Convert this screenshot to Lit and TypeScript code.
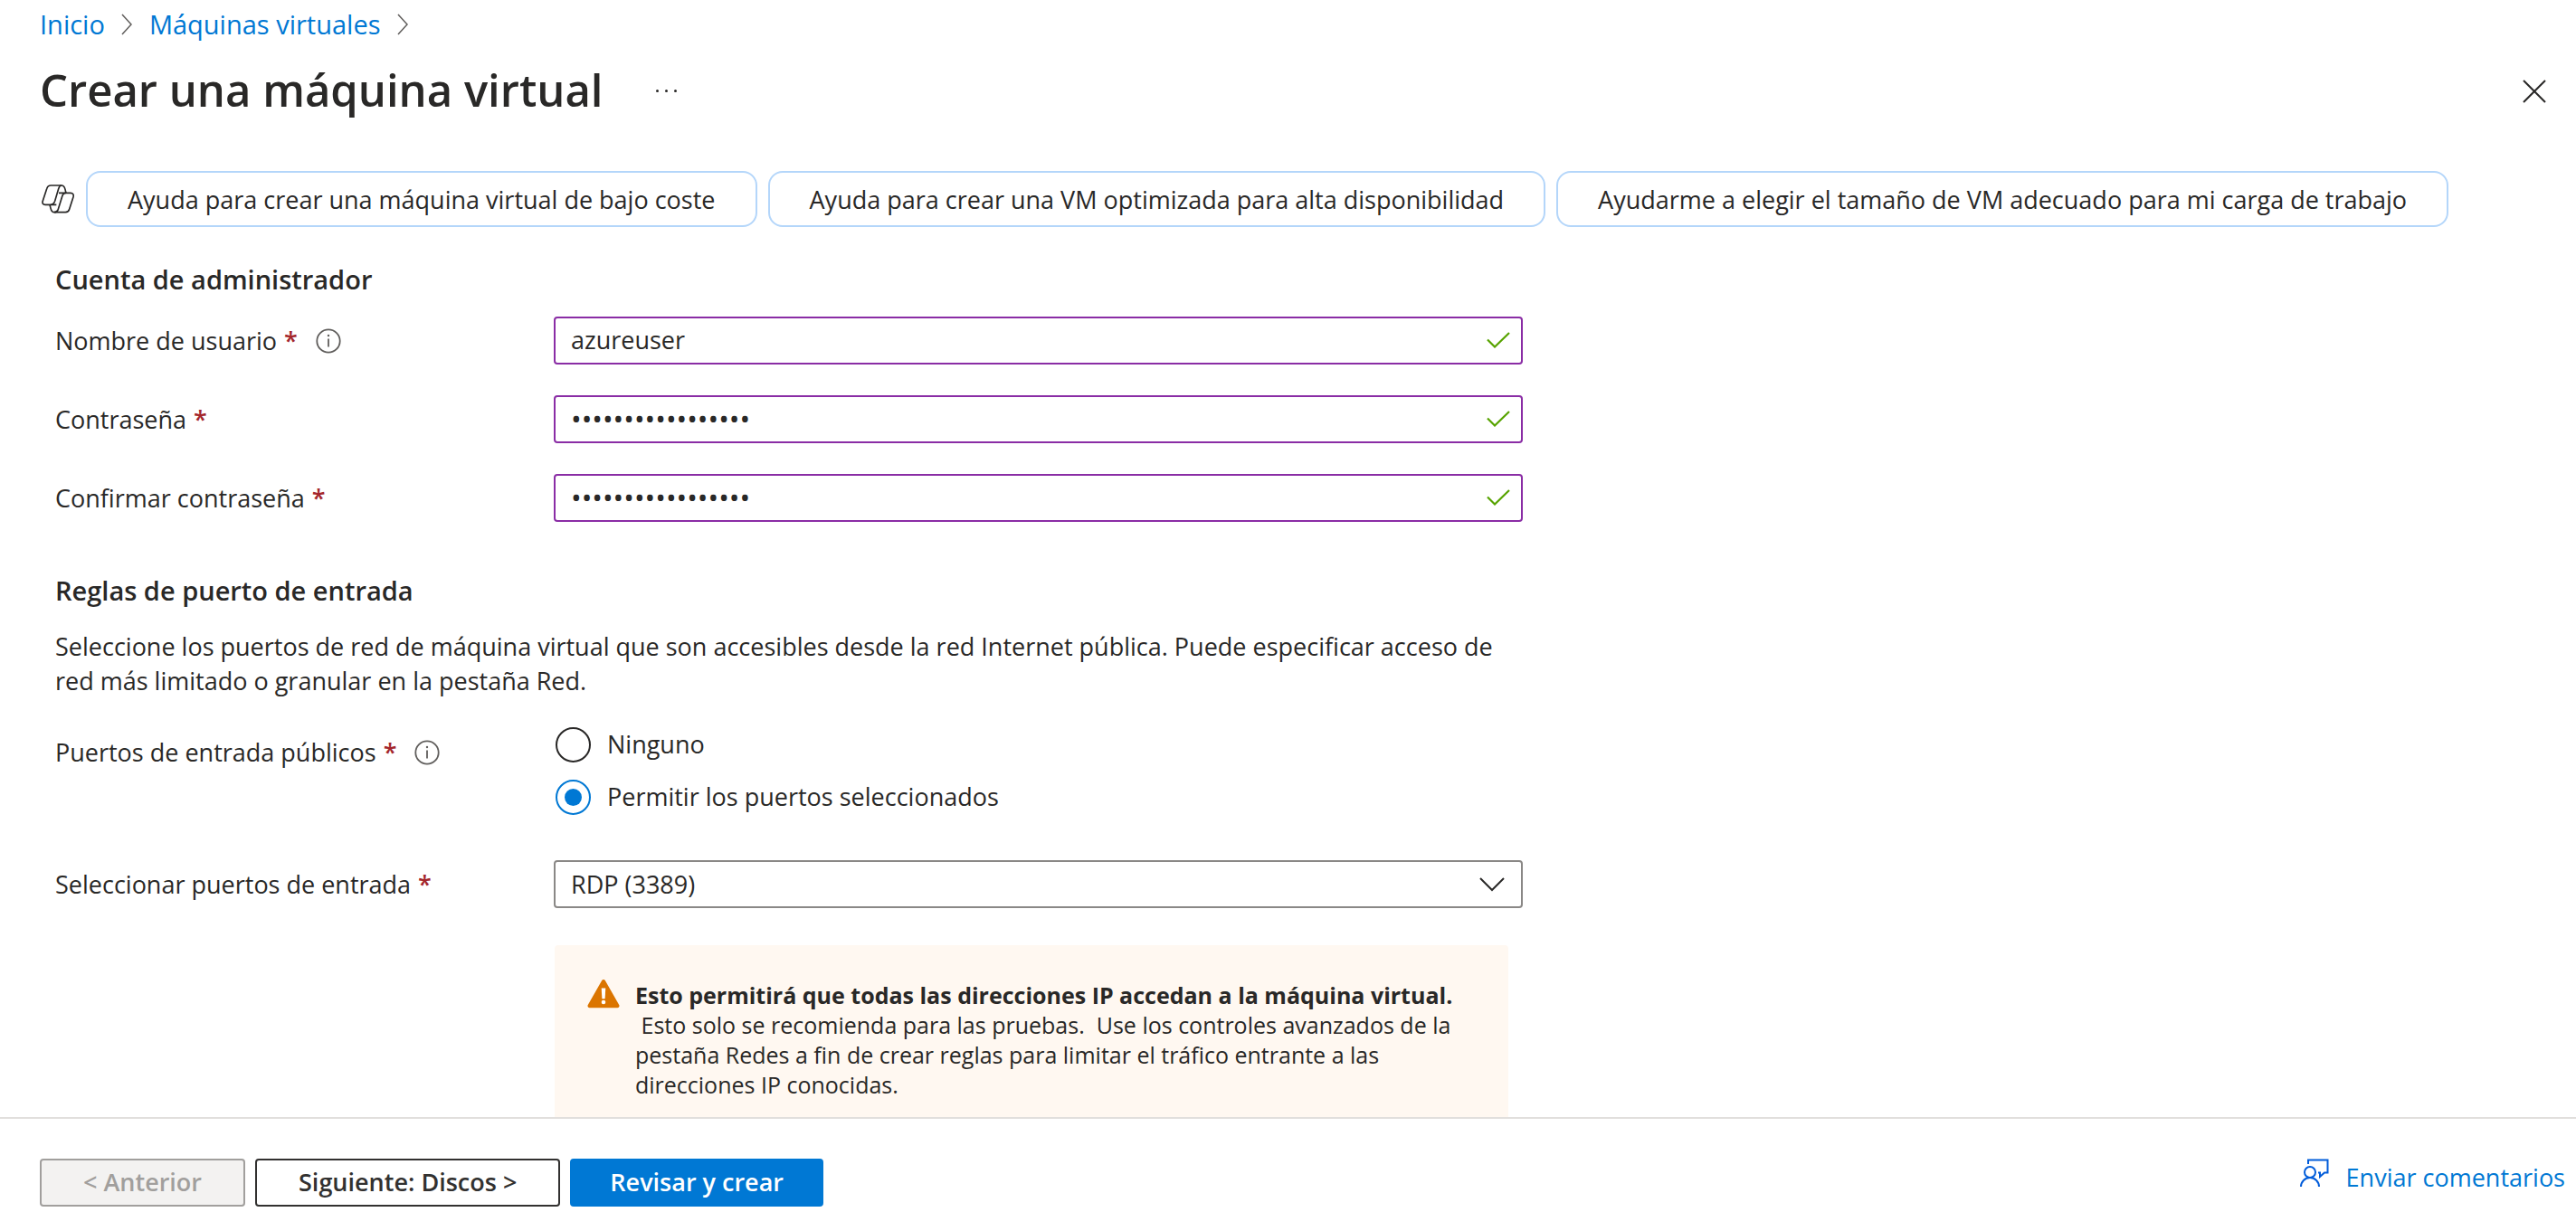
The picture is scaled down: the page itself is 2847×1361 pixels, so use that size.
import { LitElement, html, css, svg } from "lit";
import { customElement, property, state } from "lit/decorators.js";

const icons = {
  crumb: svg`<svg class="crumb-sep" viewBox="0 0 12 24" aria-hidden="true"><path d="M1 1 11 12 1 23" /></svg>`,
  check: svg`<svg class="check" viewBox="0 0 26 18" aria-hidden="true"><path d="M1 8.5 9 16.5 25 1" /></svg>`,
  copilot: svg`<svg class="copilot" viewBox="0 0 108 96" aria-hidden="true">
    <path d="M66 3H31C22 3 19 7 17 14L4 54C1 63 5 67 12 67H49" />
    <path d="M66 3C60 3 58 7 56 14L44 55C41 64 38 67 30 67" />
    <path d="M66 3C74 3 76 8 78 16L81 28" />
    <path d="M57 28H96C104 28 107 34 105 41L92 82C90 89 86 92 79 92H42C34 92 32 87 30 79L27 67" />
    <path d="M80 28C72 28 70 32 68 40L55 82C52 90 48 92 42 92" />
  </svg>`,
  close: svg`<svg class="close-icon" viewBox="0 0 26 26" aria-hidden="true"><path d="M1 1 25 25M25 1 1 25" /></svg>`,
  info: svg`<svg class="info-icon" viewBox="0 0 28 28" aria-hidden="true"><circle cx="14" cy="14" r="12.7" /><path d="M14 11.5V20.5" /><circle class="dot" cx="14" cy="8" r="1.2" /></svg>`,
  chevron: svg`<svg class="chevron" viewBox="0 0 28 16" aria-hidden="true"><path d="M1 1 14 14 27 1" /></svg>`,
  warning: svg`<svg class="warning-icon" viewBox="0 0 36 34" aria-hidden="true">
    <path class="tri" d="M16.2 2.1a2 2 0 0 1 3.6 0L35.2 29a2.2 2.2 0 0 1-1.9 3.3H2.7A2.2 2.2 0 0 1 .8 29Z" />
    <path class="mark" d="M15.7 10.5h4.6l-.7 11.7h-3.2Z" /><circle class="mark" cx="18" cy="26" r="2.3" />
  </svg>`,
  feedback: svg`<svg class="feedback-icon" viewBox="0 0 32 32" aria-hidden="true">
    <path d="M9 6V1.5H30.5V15.5H27L22 20V15.5H20" /><circle cx="11" cy="15" r="6" /><path d="M1 31a10 10 0 0 1 20 0" />
  </svg>`,
};

@customElement("app-root")
export class AppRoot extends LitElement {
  @property() username = "azureuser";
  @state() private ports = "selected";

  static styles = css`
    :host {
      display: flex;
      flex-direction: column;
      height: 100vh;
      overflow: hidden;
      background: #fff;
      color: #292827;
      font-family: "Open Sans", "Noto Sans", sans-serif;
      font-size: 27px;
      line-height: 38px;
    }
    * { box-sizing: border-box; }
    svg { display: block; flex: none; fill: none; stroke: currentColor; stroke-width: 2; }
    button, input, select { font: inherit; color: inherit; margin: 0; }
    button { cursor: pointer; }
    a { color: #0078d4; text-decoration: none; }
    h1, h2, p, ol { margin: 0; padding: 0; }

    .crumbs { display: flex; gap: 19px; padding: 8px 44px 0; list-style: none; font-size: 29px; }
    .crumbs li { display: flex; align-items: center; gap: 18px; }
    .crumb-sep { width: 12px; height: 24px; color: #605e5c; stroke-width: 1.5; }

    .title-row { display: flex; align-items: center; padding: 17px 32px 0 44px; }
    h1 { font-size: 49px; line-height: 72px; font-weight: 600; }
    .icon-button { display: flex; align-items: center; justify-content: center; border: 0; padding: 0; background: none; }
    .more { gap: 7px; width: 40px; height: 40px; margin-left: 50px; padding-top: 2px; }
    .more i { width: 3px; height: 3px; border-radius: 50%; background: #292827; }
    .close { width: 28px; height: 40px; margin-left: auto; padding-top: 4px; }
    .close-icon { width: 26px; height: 26px; }

    .prompts { display: flex; align-items: center; gap: 12px; padding: 54px 44px 0; }
    .copilot { width: 36px; height: 32px; margin: 0 1px 0 2px; stroke-width: 5; }
    .prompt { height: 62px; padding: 2px 44px 0; border: 2px solid #b4d6fa; border-radius: 16px; background: #fff; white-space: nowrap; }

    main { flex: 1; min-height: 0; overflow: hidden; padding: 39px 61px 0; }
    .form { max-width: 1622px; }
    h2 { font-size: 29px; line-height: 38px; font-weight: 600; }
    .row { display: grid; grid-template-columns: minmax(0, 551px) minmax(0, 1071px); min-height: 53px; align-items: center; }
    .fields { display: grid; gap: 34px; margin: 22px 0 57px; }
    .label { display: flex; align-items: center; }
    .star { color: #a4262c; font-weight: 600; margin-left: 8px; }
    .info { margin-left: 20px; width: 28px; height: 28px; color: #605e5c; }
    .info-icon { width: 28px; height: 28px; stroke-width: 1.8; }
    .dot { fill: currentColor; stroke: none; }
    .box { display: flex; align-items: center; height: 53px; border: 2px solid #8a2da5; border-radius: 4px; padding: 0 12px 2px 0; background: #fff; }
    .box input { flex: 1; min-width: 0; height: 47px; border: 0; outline: 0; background: none; padding: 0 17px; }
    .box input[type="password"] { font-size: 31px; }
    .check { width: 26px; height: 18px; color: #57a300; stroke-width: 2.2; }

    .intro { margin: 24px 0 31px; }
    .ports { align-items: start; }
    .ports .label { padding-top: 10px; }
    .radios { display: grid; gap: 18px; border: 0; margin: 0; padding: 0; }
    .radio { display: flex; align-items: center; gap: 18px; height: 40px; padding-left: 2px; }
    .radio input { appearance: none; display: grid; place-items: center; width: 39px; height: 39px; border: 2px solid #292827; border-radius: 50%; }
    .radio input:checked { border-color: #0078d4; }
    .radio input:checked::before { content: ""; width: 19px; height: 19px; border-radius: 50%; background: #0078d4; }

    .select-row { margin-top: 50px; }
    .select { display: grid; align-items: center; }
    .select > * { grid-area: 1 / 1; }
    .select select { appearance: none; width: 100%; height: 53px; padding: 0 60px 0 17px; border: 2px solid #8a8886; border-radius: 4px; background: #fff; }
    .chevron { width: 28px; height: 16px; justify-self: end; margin-right: 20px; pointer-events: none; }

    .notice { display: flex; gap: 17px; max-width: 1054px; margin: 41px 0 0 552px; padding: 37px 36px 44px; border-radius: 4px; background: #fff8f1; font-size: 25px; line-height: 33px; }
    .warning-icon { width: 36px; height: 34px; stroke: none; }
    .tri { fill: #db7500; }
    .mark { fill: #fff; }
    .notice-text { padding-top: 2px; max-width: 920px; }
    .notice-text strong { display: block; font-weight: 700; white-space: nowrap; }

    footer { display: flex; align-items: flex-start; gap: 11px; height: 126px; padding: 44px 12px 0 44px; border-top: 2px solid #e1dfdd; background: #fff; }
    .action { height: 53px; padding: 0 46px 2px; border: 2px solid #323130; border-radius: 4px; background: #fff; font-weight: 600; color: #323130; white-space: nowrap; }
    .action:disabled { border-color: #a19f9d; background: #f3f2f1; color: #a19f9d; cursor: default; }
    .action.primary { padding: 0 42px 2px; border-color: #0078d4; background: #0078d4; color: #fff; }
    .feedback { display: flex; gap: 19px; margin-left: auto; }
    .feedback span { padding-top: 2px; }
    .feedback-icon { width: 32px; height: 32px; color: #015cda; }
  `;

  private label(id: string, text: string, info = false) {
    return html`<div class="label">
      <label for=${id}>${text}<span class="star">*</span></label>
      ${info ? html`<button class="icon-button info" type="button" aria-label="Información">${icons.info}</button>` : ""}
    </div>`;
  }

  private field(id: string, text: string, type: string, value: string, info = false) {
    return html`<div class="row">
      ${this.label(id, text, info)}
      <div class="box"><input id=${id} type=${type} .value=${value} autocomplete="off" />${icons.check}</div>
    </div>`;
  }

  private radio(value: string, text: string) {
    return html`<label class="radio">
      <input type="radio" name="ports" value=${value} .checked=${this.ports === value} @change=${() => (this.ports = value)} />
      <span>${text}</span>
    </label>`;
  }

  render() {
    return html`
      <nav>
        <ol class="crumbs">
          ${["Inicio", "Máquinas virtuales"].map((c) => html`<li><a href="#">${c}</a>${icons.crumb}</li>`)}
        </ol>
      </nav>
      <header class="title-row">
        <h1>Crear una máquina virtual</h1>
        <button class="icon-button more" type="button" aria-label="Más"><i></i><i></i><i></i></button>
        <button class="icon-button close" type="button" aria-label="Cerrar">${icons.close}</button>
      </header>
      <div class="prompts">
        ${icons.copilot}
        ${[
          "Ayuda para crear una máquina virtual de bajo coste",
          "Ayuda para crear una VM optimizada para alta disponibilidad",
          "Ayudarme a elegir el tamaño de VM adecuado para mi carga de trabajo",
        ].map((p) => html`<button class="prompt" type="button">${p}</button>`)}
      </div>
      <main>
        <form class="form">
          <h2>Cuenta de administrador</h2>
          <div class="fields">
            ${this.field("user", "Nombre de usuario", "text", this.username, true)}
            ${this.field("pass", "Contraseña", "password", "•".repeat(17))}
            ${this.field("confirm", "Confirmar contraseña", "password", "•".repeat(17))}
          </div>
          <h2>Reglas de puerto de entrada</h2>
          <p class="intro">
            Seleccione los puertos de red de máquina virtual que son accesibles desde la red Internet pública. Puede especificar acceso de red más limitado o granular en la pestaña Red.
          </p>
          <div class="row ports">
            <div class="label">
              <span id="ports-label">Puertos de entrada públicos<span class="star">*</span></span>
              <button class="icon-button info" type="button" aria-label="Información">${icons.info}</button>
            </div>
            <fieldset class="radios" aria-labelledby="ports-label">
              ${this.radio("none", "Ninguno")} ${this.radio("selected", "Permitir los puertos seleccionados")}
            </fieldset>
          </div>
          <div class="row select-row">
            ${this.label("inbound", "Seleccionar puertos de entrada")}
            <div class="select">
              <select id="inbound"><option>RDP (3389)</option></select>
              ${icons.chevron}
            </div>
          </div>
          <div class="notice" role="alert">
            ${icons.warning}
            <div class="notice-text">
              <strong>Esto permitirá que todas las direcciones IP accedan a la máquina virtual.</strong>
              &nbsp;Esto solo se recomienda para las pruebas.&nbsp; Use los controles avanzados de la pestaña Redes a fin de crear reglas para limitar el tráfico entrante a las direcciones IP conocidas.
            </div>
          </div>
        </form>
      </main>
      <footer>
        <button class="action" type="button" disabled>&lt; Anterior</button>
        <button class="action" type="button">Siguiente: Discos &gt;</button>
        <button class="action primary" type="button">Revisar y crear</button>
        <a class="feedback" href="#">${icons.feedback}<span>Enviar comentarios</span></a>
      </footer>
    `;
  }
}
